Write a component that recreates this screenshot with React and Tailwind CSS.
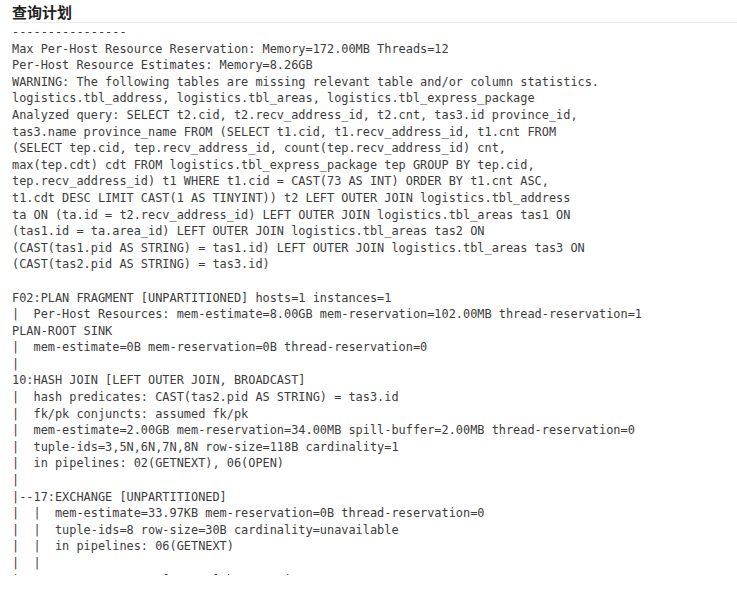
const planLines = [
  '----------------',
  'Max Per-Host Resource Reservation: Memory=172.00MB Threads=12',
  'Per-Host Resource Estimates: Memory=8.26GB',
  'WARNING: The following tables are missing relevant table and/or column statistics.',
  'logistics.tbl_address, logistics.tbl_areas, logistics.tbl_express_package',
  'Analyzed query: SELECT t2.cid, t2.recv_address_id, t2.cnt, tas3.id province_id,',
  'tas3.name province_name FROM (SELECT t1.cid, t1.recv_address_id, t1.cnt FROM',
  '(SELECT tep.cid, tep.recv_address_id, count(tep.recv_address_id) cnt,',
  'max(tep.cdt) cdt FROM logistics.tbl_express_package tep GROUP BY tep.cid,',
  'tep.recv_address_id) t1 WHERE t1.cid = CAST(73 AS INT) ORDER BY t1.cnt ASC,',
  't1.cdt DESC LIMIT CAST(1 AS TINYINT)) t2 LEFT OUTER JOIN logistics.tbl_address',
  'ta ON (ta.id = t2.recv_address_id) LEFT OUTER JOIN logistics.tbl_areas tas1 ON',
  '(tas1.id = ta.area_id) LEFT OUTER JOIN logistics.tbl_areas tas2 ON',
  '(CAST(tas1.pid AS STRING) = tas1.id) LEFT OUTER JOIN logistics.tbl_areas tas3 ON',
  '(CAST(tas2.pid AS STRING) = tas3.id)',
  '',
  'F02:PLAN FRAGMENT [UNPARTITIONED] hosts=1 instances=1',
  '|  Per-Host Resources: mem-estimate=8.00GB mem-reservation=102.00MB thread-reservation=1',
  'PLAN-ROOT SINK',
  '|  mem-estimate=0B mem-reservation=0B thread-reservation=0',
  '|',
  '10:HASH JOIN [LEFT OUTER JOIN, BROADCAST]',
  '|  hash predicates: CAST(tas2.pid AS STRING) = tas3.id',
  '|  fk/pk conjuncts: assumed fk/pk',
  '|  mem-estimate=2.00GB mem-reservation=34.00MB spill-buffer=2.00MB thread-reservation=0',
  '|  tuple-ids=3,5N,6N,7N,8N row-size=118B cardinality=1',
  '|  in pipelines: 02(GETNEXT), 06(OPEN)',
  '|',
  '|--17:EXCHANGE [UNPARTITIONED]',
  '|  |  mem-estimate=33.97KB mem-reservation=0B thread-reservation=0',
  '|  |  tuple-ids=8 row-size=30B cardinality=unavailable',
  '|  |  in pipelines: 06(GETNEXT)',
  '|  |',
  '|  F01:PLAN FRAGMENT [RANDOM] hosts=1 instances=1',
  '|  Per-Host Resources: mem-estimate=16.00MB mem-reservation=0B',
];

export default function App() {
  return (
    <div className="w-[737px] h-[593px] bg-white overflow-hidden">
      <div className="pl-3">
        <h2 className="h-[23px] pt-px leading-[22px] text-[15px] font-bold text-[#222] border-b border-[#ececec] font-['Noto_Sans_CJK_SC',sans-serif]">
          查询计划
        </h2>
        <div className="h-[552px] pt-px overflow-hidden">
          <pre className="m-0 font-['DejaVu_Sans_Mono',monospace] text-[11.9px] leading-[16.6px] text-[#3c3c3c] whitespace-pre">
            {planLines.join('\n')}
          </pre>
        </div>
      </div>
    </div>
  );
}
